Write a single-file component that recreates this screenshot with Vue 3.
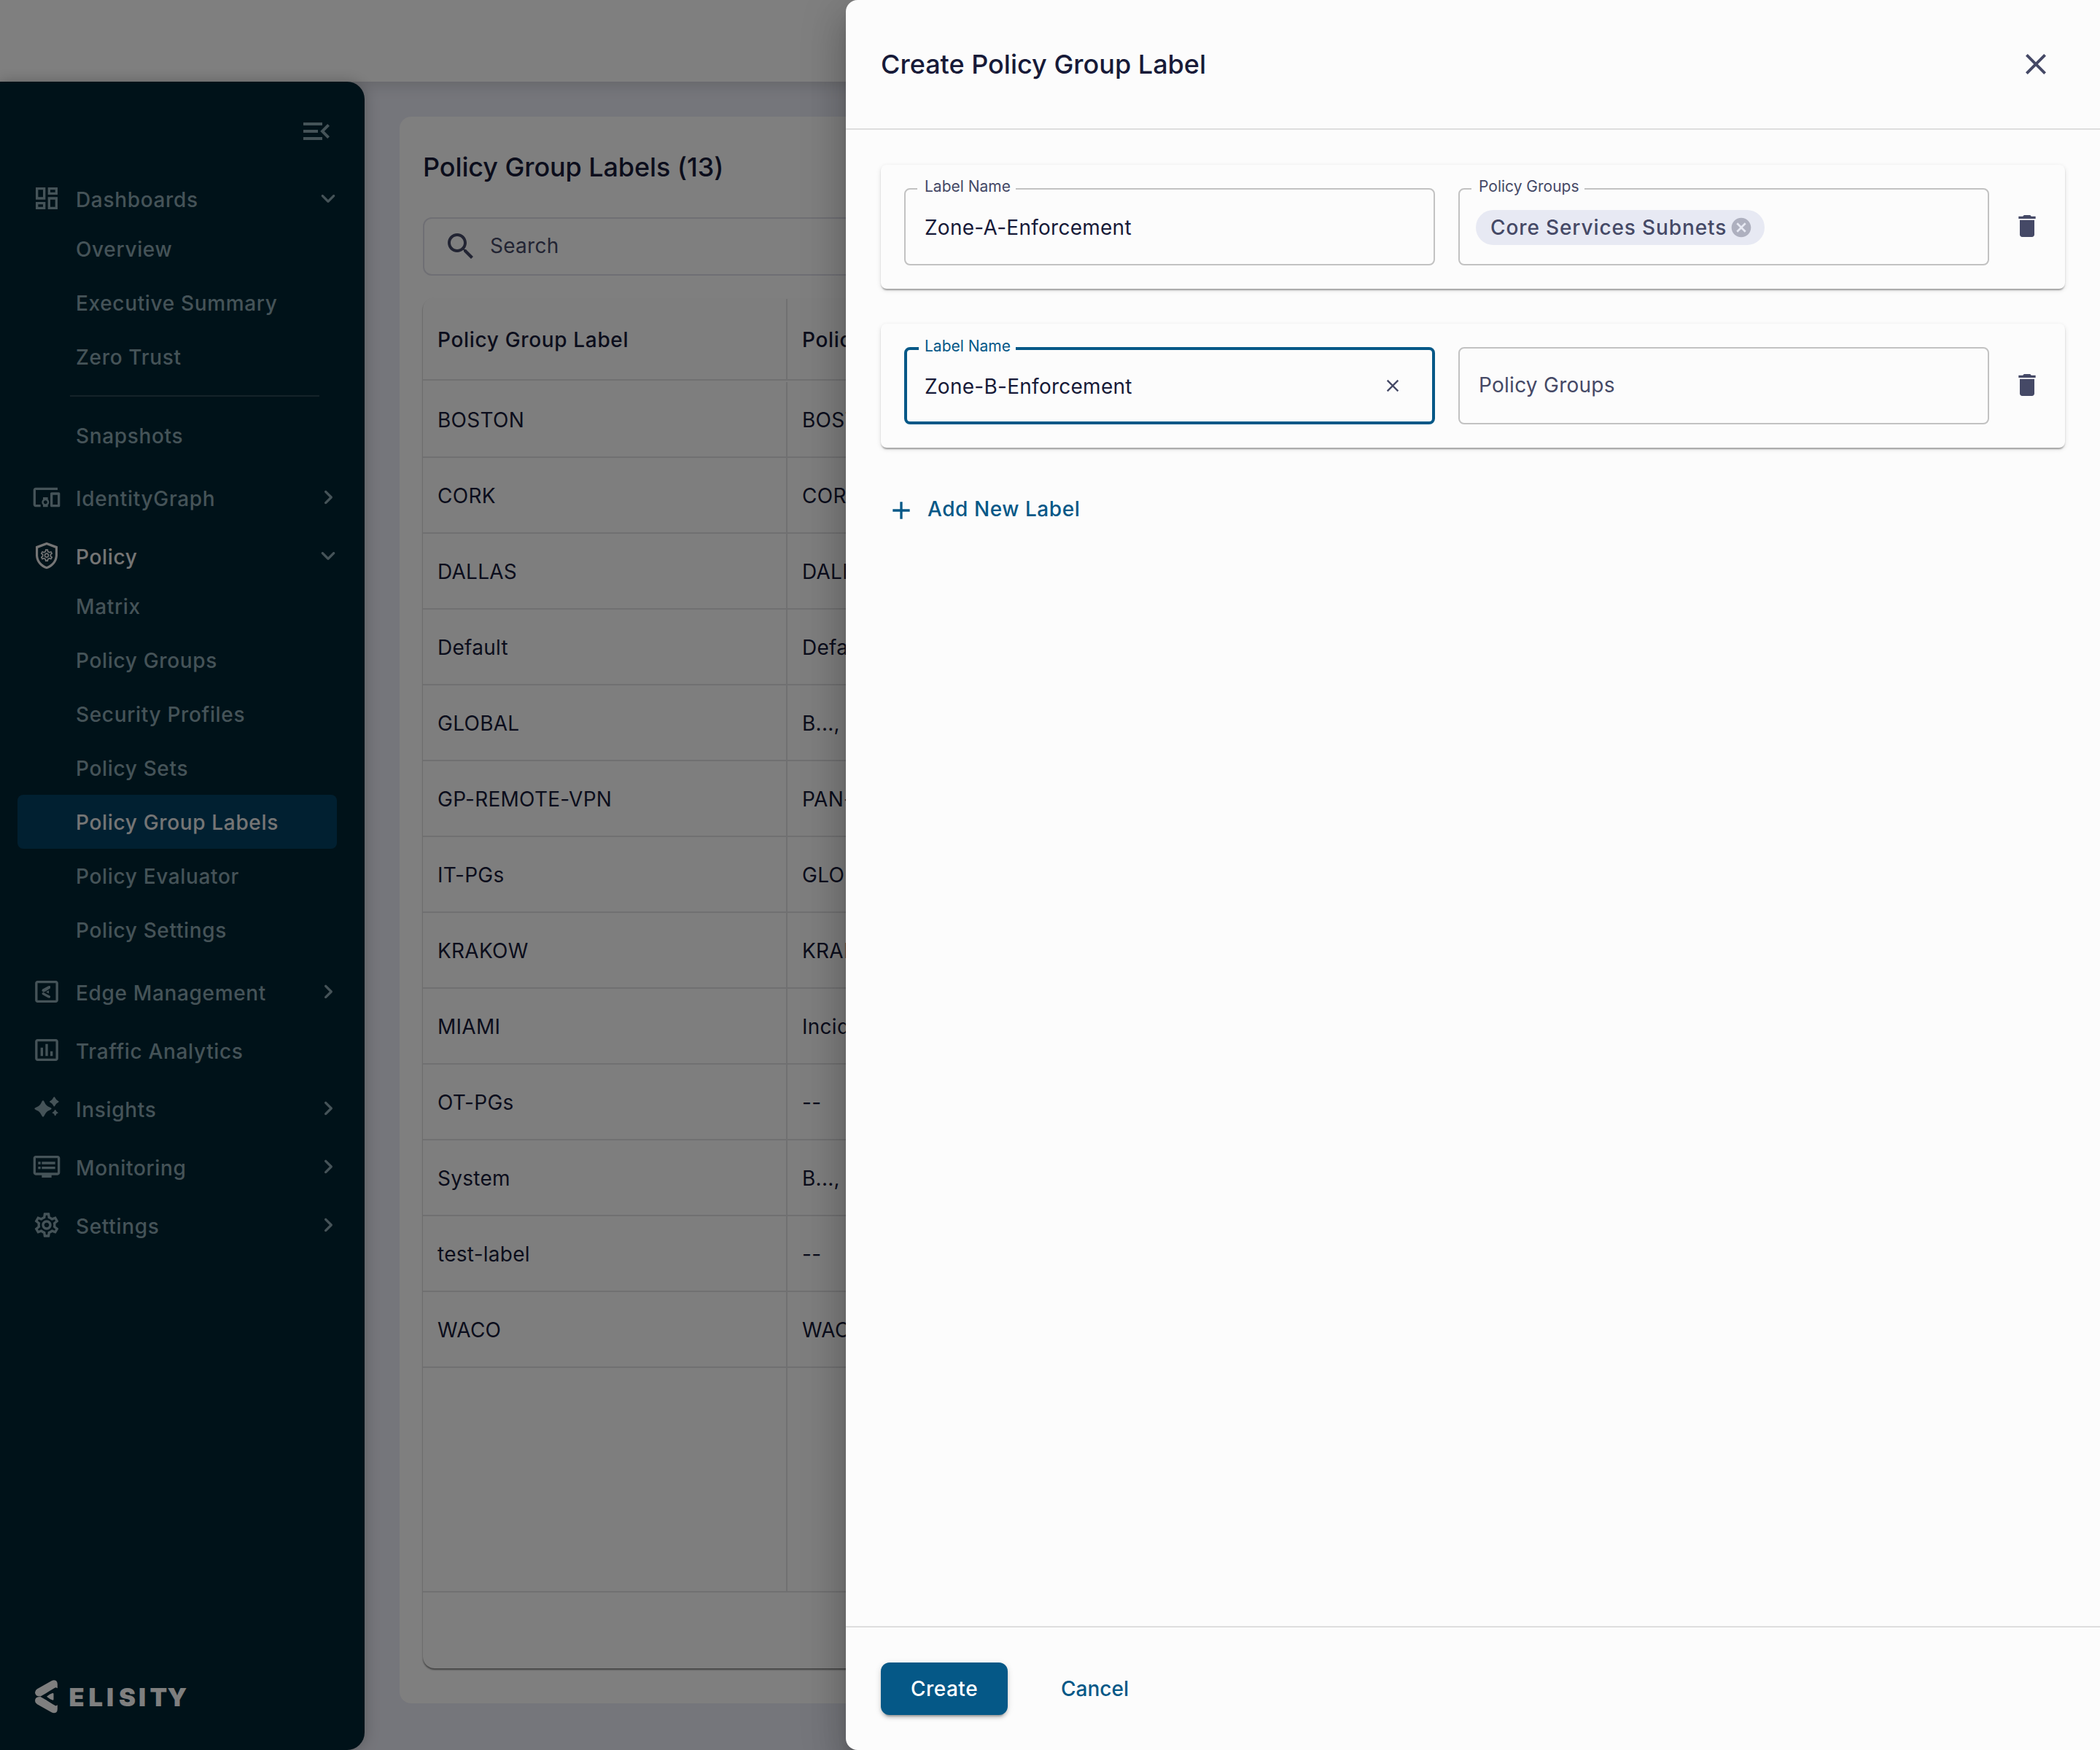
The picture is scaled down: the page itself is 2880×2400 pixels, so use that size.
<template>
  <div class="app">
    <header class="topbar"></header>

    <div class="body">
      <nav class="sidebar">
        <div class="sidebar-toggle">
          <svg class="icon-lg" viewBox="0 0 24 24"><path :d="icons.menuOpen" /></svg>
        </div>

        <div class="nav-list">
          <template v-for="section in sections" :key="section.name">
            <div class="nav-parent" :class="{ current: section.current }">
              <svg class="icon-md" viewBox="0 0 24 24">
                <path :d="icons[section.icon]" fill-rule="evenodd" />
                <!-- 방패 안의 톱니바퀴 -->
                <path v-if="section.icon === 'shield'" class="shield-gear" :d="icons.gear" />
              </svg>
              <span class="nav-name">{{ section.name }}</span>
              <svg v-if="section.arrow" class="icon-md nav-arrow" viewBox="0 0 24 24">
                <path :d="icons[section.arrow]" />
              </svg>
            </div>
            <template v-for="child in section.children" :key="child">
              <div v-if="child === '-'" class="nav-divider"></div>
              <div v-else class="nav-child" :class="{ active: child === activeItem }">{{ child }}</div>
            </template>
          </template>
        </div>

        <svg class="logo" viewBox="0 0 210 48">
          <path d="M22.500 2.200Q26 .2 29 2Q30.800 3.500 30.800 6.500V12.300L28.500 11.200Q26 12 15 19.200L7.500 23.500Q0 23.500 0 18Q0 15 3 13.200Z" />
          <path d="M22.500 45.200Q26 47.200 29 45.500Q30.800 44 30.800 41V35.200L28.500 36.400Q26 35.500 15 28.300L7.500 24.100Q0 24.100 0 29.500Q0 32.500 3 34.200Z" />
          <path d="M16 23.700Q20 20.200 24 19Q25.500 18.800 25.500 20V27.500Q25.500 29 24 28.500Q20 27.200 16 23.700Z" />
          <text x="46.500 73.500 98 115 142 157.500 181.500" y="36.800">ELISITY</text>
        </svg>
      </nav>

      <main class="content">
        <section class="panel">
          <h1 class="panel-title">Policy Group Labels (13)</h1>
          <div class="search">
            <svg class="icon-lg" viewBox="0 0 24 24"><path :d="icons.search" /></svg>
            <span>Search</span>
          </div>
          <div class="table">
            <div class="table-row table-head">
              <div class="cell">Policy Group Label</div>
              <div class="cell">Policy Groups</div>
            </div>
            <div v-for="row in rows" :key="row.label" class="table-row">
              <div class="cell">{{ row.label }}</div>
              <div class="cell">{{ row.groups }}</div>
            </div>
            <div class="table-row table-filler">
              <div class="cell"></div>
              <div class="cell"></div>
            </div>
            <div class="table-footer"></div>
          </div>
        </section>
      </main>
    </div>

    <div class="backdrop"></div>

    <aside class="drawer">
      <div class="drawer-header">
        <h2 class="drawer-title">Create Policy Group Label</h2>
        <button class="icon-btn" aria-label="Close">
          <svg class="icon-lg" viewBox="0 0 24 24"><path :d="icons.close" /></svg>
        </button>
      </div>

      <div class="drawer-body">
        <div v-for="(entry, index) in entries" :key="index" class="label-card">
          <fieldset class="field" :class="{ focused: entry.focused }">
            <legend><span>Label Name</span></legend>
            <div class="field-inner">
              <span class="field-value">{{ entry.name }}</span>
              <svg v-if="entry.focused" class="clear-icon" viewBox="0 0 24 24"><path :d="icons.close" /></svg>
            </div>
          </fieldset>

          <fieldset class="field">
            <legend v-if="entry.groups.length"><span>Policy Groups</span></legend>
            <div class="field-inner">
              <div v-for="group in entry.groups" :key="group" class="chip">
                <span>{{ group }}</span>
                <svg class="chip-delete" viewBox="0 0 24 24"><path :d="icons.cancel" /></svg>
              </div>
              <span v-if="!entry.groups.length" class="field-placeholder">Policy Groups</span>
            </div>
          </fieldset>

          <button class="icon-btn trash-btn" aria-label="Delete" @click="removeEntry(index)">
            <svg class="icon-md" viewBox="0 0 24 24"><path :d="icons.trash" /></svg>
          </button>
        </div>

        <button class="add-btn" @click="addEntry">
          <svg class="icon-md" viewBox="0 0 24 24"><path :d="icons.add" /></svg>
          <span>Add New Label</span>
        </button>
      </div>

      <div class="drawer-footer">
        <button class="btn btn-primary">Create</button>
        <button class="btn btn-text">Cancel</button>
      </div>
    </aside>
  </div>
</template>

<script setup>
import { ref } from 'vue'

const icons = {
  menuOpen: 'M3 18h13v-2H3v2zM3 6v2h13V6H3zm0 7h10v-2H3v2zm18 2.590L17.420 12 21 8.410 19.590 7l-5 5 5 5L21 15.590z',
  dashboard: 'M19 5v2h-4V5h4M9 5v6H5V5h4m10 8v6h-4v-6h4M9 17v2H5v-2h4M21 3h-8v6h8V3zM11 3H3v10h8V3zm10 8h-8v10h8V11zm-10 4H3v6h8v-6z',
  devices: 'M3 6h18V4H3c-1.100 0-2 .9-2 2v12c0 1.100.9 2 2 2h4v-2H3V6zm10 6H9v1.780c-.61.550-1 1.330-1 2.220s.39 1.670 1 2.220V20h4v-1.780c.61-.55 1-1.340 1-2.220s-.39-1.670-1-2.220V12zm-2 5.500c-.83 0-1.500-.67-1.500-1.500s.67-1.500 1.500-1.500 1.500.67 1.500 1.500-.67 1.500-1.500 1.500zM22 8h-6c-.5 0-1 .5-1 1v10c0 .5.5 1 1 1h6c.5 0 1-.5 1-1V9c0-.5-.5-1-1-1zm-1 10h-4v-8h4v8z',
  shield: 'M12 1L3 4.400v7.100c0 5.550 3.840 10 9 11.500 5.160-1.500 9-5.950 9-11.500V4.400L12 1zm0 2.100l7.100 2.700v5.700c0 4.520-3.030 8-7.100 9.470-4.070-1.470-7.100-4.950-7.100-9.470V5.800L12 3.100z',
  edge: 'M4.500 3c-1.100 0-2 .9-2 2v14c0 1.100.9 2 2 2h15c1.100 0 2-.9 2-2V5c0-1.100-.9-2-2-2zm0 2h15v14h-15zM14.500 7.200l.5.300v1.700l-3.600 2.300-2 1L8 11.400l.4-1.300 5-2.700zM9.400 12.600l2.100 1.200 3.500 1.800v1.200l-.8.400-1.200-.3-4.700-2.700-.2-1.200zM13.800 11v2.500L11.500 12.300z',
  chart: 'M9 17H7v-7h2v7zm4 0h-2V7h2v10zm4 0h-2v-4h2v4zM4.500 3c-1.100 0-2 .9-2 2v14c0 1.100.9 2 2 2h15c1.100 0 2-.9 2-2V5c0-1.100-.9-2-2-2zm0 2h15v14h-15z',
  sparkle: 'M9 5.500q.7 0 1.100 1.200 1.200 3.200 4.700 4.600 1.200.5 1.200 1t-1.200 1q-3.500 1.300-4.700 4.500Q9.700 19 9 19t-1.100-1.200q-1.200-3.200-4.700-4.500-1.200-.5-1.200-1t1.200-1q3.500-1.400 4.700-4.600Q8.300 5.500 9 5.500zM18.200 2.500q.4 0 .7.700.8 1.900 2.400 2.600.7.300.7.700t-.7.700q-1.600.7-2.400 2.600-.3.700-.7.700t-.7-.7q-.8-1.900-2.400-2.600-.7-.3-.7-.7t.7-.7q1.600-.7 2.400-2.600.3-.7.700-.7zM19 13q.4.100.6.800.3 1 1.300 1.300.6.200.6.500t-.6.500q-1 .3-1.300 1.300-.2.700-.6.800-.4-.1-.6-.8-.3-1-1.300-1.300-.6-.2-.6-.5t.6-.5q1-.3 1.300-1.300.2-.7.600-.8z',
  monitor: 'M21 3H3c-1.100 0-2 .9-2 2v12c0 1.100.9 2 2 2h5v2h8v-2h5c1.100 0 1.990-.9 1.990-2L23 5c0-1.100-.9-2-2-2zm0 14H3V5h18v12zm-2-9H8v2h11V8zm0 4H8v2h11v-2zM7 8H5v2h2V8zm0 4H5v2h2v-2z',
  gear: 'M19.430 12.980c.04-.32.070-.64.070-.98s-.03-.66-.07-.98l2.110-1.650c.19-.15.240-.42.120-.64l-2-3.460c-.09-.16-.26-.25-.44-.25-.06 0-.12.010-.17.030l-2.490 1c-.52-.4-1.080-.73-1.690-.98l-.38-2.650C14.460 2.180 14.250 2 14 2h-4c-.25 0-.46.180-.49.420l-.38 2.650c-.61.250-1.170.590-1.690.980l-2.490-1c-.06-.02-.12-.03-.18-.03-.17 0-.34.090-.43.250l-2 3.460c-.13.220-.07.490.120.640l2.110 1.650c-.04.320-.07.650-.07.980s.03.660.070.980l-2.110 1.650c-.19.150-.24.420-.12.640l2 3.460c.09.160.26.250.440.250.06 0 .12-.01.170-.03l2.490-1c.52.400 1.080.730 1.690.980l.38 2.650c.03.240.24.420.490.420h4c.25 0 .46-.18.490-.42l.38-2.650c.61-.25 1.170-.59 1.690-.98l2.490 1c.06.020.12.030.180.030.17 0 .34-.09.430-.25l2-3.460c.12-.22.070-.49-.12-.64l-2.110-1.650zm-1.980-1.710c.04.310.05.520.050.730 0 .21-.02.430-.05.730l-.14 1.130.890.700 1.080.840-.7 1.210-1.270-.51-1.040-.42-.9.680c-.43.320-.84.560-1.250.730l-1.060.430-.16 1.130-.2 1.350h-1.400l-.19-1.350-.16-1.130-1.060-.43c-.43-.18-.83-.41-1.230-.71l-.91-.7-1.060.430-1.270.510-.7-1.210 1.080-.84.890-.7-.14-1.130c-.03-.31-.05-.54-.05-.74s.02-.43.050-.73l.14-1.130-.89-.7-1.080-.84.700-1.210 1.270.510 1.040.420.900-.68c.43-.32.840-.56 1.250-.73l1.060-.43.160-1.130.2-1.350h1.390l.19 1.350.160 1.130 1.060.430c.43.180.83.410 1.230.710l.91.700 1.060-.43 1.270-.51.700 1.210-1.070.850-.89.700.14 1.130zM12 8c-2.210 0-4 1.790-4 4s1.790 4 4 4 4-1.790 4-4-1.790-4-4-4zm0 6c-1.100 0-2-.9-2-2s.9-2 2-2 2 .9 2 2-.9 2-2 2z',
  down: 'M8.120 9.290L12 13.170l3.880-3.880c.39-.39 1.020-.39 1.410 0 .39.390.39 1.020 0 1.410l-4.590 4.590c-.39.390-1.020.39-1.410 0L6.700 10.700c-.39-.39-.39-1.020 0-1.410.39-.38 1.030-.39 1.420 0z',
  right: 'M9.290 6.710c-.39.390-.39 1.020 0 1.410L13.170 12l-3.880 3.880c-.39.390-.39 1.020 0 1.410.39.390 1.020.39 1.410 0l4.590-4.590c.39-.39.39-1.020 0-1.410L10.700 6.700c-.38-.38-1.020-.38-1.410.010z',
  search: 'M15.500 14h-.79l-.28-.27C15.410 12.590 16 11.110 16 9.500 16 5.910 13.090 3 9.500 3S3 5.910 3 9.500 5.910 16 9.500 16c1.610 0 3.090-.59 4.230-1.570l.27.280v.79l5 4.990L20.490 19l-4.990-5zm-6 0C7.010 14 5 11.990 5 9.500S7.010 5 9.500 5 14 7.010 14 9.500 11.990 14 9.500 14z',
  close: 'M19 6.410L17.590 5 12 10.590 6.410 5 5 6.410 10.590 12 5 17.590 6.410 19 12 13.410 17.590 19 19 17.590 13.410 12z',
  cancel: 'M12 2C6.470 2 2 6.470 2 12s4.470 10 10 10 10-4.470 10-10S17.530 2 12 2zm5 13.590L15.590 17 12 13.410 8.410 17 7 15.590 10.590 12 7 8.410 8.410 7 12 10.590 15.590 7 17 8.410 13.410 12 17 15.590z',
  trash: 'M6 19c0 1.100.9 2 2 2h8c1.100 0 2-.9 2-2V7H6v12zM19 4h-3.500l-1-1h-5l-1 1H5v2h14V4z',
  add: 'M19 13h-6v6h-2v-6H5v-2h6V5h2v6h6v2z'
}

const activeItem = ref('Policy Group Labels')

const sections = [
  { name: 'Dashboards', icon: 'dashboard', arrow: 'down', children: ['Overview', 'Executive Summary', 'Zero Trust', '-', 'Snapshots'] },
  { name: 'IdentityGraph', icon: 'devices', arrow: 'right', children: [] },
  {
    name: 'Policy',
    icon: 'shield',
    arrow: 'down',
    current: true,
    children: ['Matrix', 'Policy Groups', 'Security Profiles', 'Policy Sets', 'Policy Group Labels', 'Policy Evaluator', 'Policy Settings']
  },
  { name: 'Edge Management', icon: 'edge', arrow: 'right', children: [] },
  { name: 'Traffic Analytics', icon: 'chart', children: [] },
  { name: 'Insights', icon: 'sparkle', arrow: 'right', children: [] },
  { name: 'Monitoring', icon: 'monitor', arrow: 'right', children: [] },
  { name: 'Settings', icon: 'gear', arrow: 'right', children: [] }
]

const rows = [
  { label: 'BOSTON', groups: 'BOSTON' },
  { label: 'CORK', groups: 'CORK' },
  { label: 'DALLAS', groups: 'DALLAS' },
  { label: 'Default', groups: 'Default' },
  { label: 'GLOBAL', groups: 'B..., ' },
  { label: 'GP-REMOTE-VPN', groups: 'PAN-' },
  { label: 'IT-PGs', groups: 'GLOBAL' },
  { label: 'KRAKOW', groups: 'KRAKOW' },
  { label: 'MIAMI', groups: 'Incident' },
  { label: 'OT-PGs', groups: '--' },
  { label: 'System', groups: 'B..., ' },
  { label: 'test-label', groups: '--' },
  { label: 'WACO', groups: 'WACO' }
]

const entries = ref([
  { name: 'Zone-A-Enforcement', groups: ['Core Services Subnets'], focused: false },
  { name: 'Zone-B-Enforcement', groups: [], focused: true }
])

const addEntry = () => {
  entries.value.push({ name: '', groups: [], focused: false })
}

const removeEntry = (index) => {
  entries.value.splice(index, 1)
}
</script>

<style>
body {
  margin: 0;
  overflow: hidden;
}
</style>

<style scoped>
.app {
  position: relative;
  display: flex;
  flex-direction: column;
  width: 2880px;
  height: 2400px;
  overflow: hidden;
  background: #ebecf6;
  font-family: Inter, "Liberation Sans", sans-serif;
  font-size: 28px;
  line-height: 40px;
  letter-spacing: 0.00938em;
  color: #171a38;
}

.app * {
  box-sizing: border-box;
}

svg {
  display: block;
  flex-shrink: 0;
  fill: currentColor;
}

.icon-lg {
  width: 48px;
  height: 48px;
}

.icon-md {
  width: 40px;
  height: 40px;
}

button {
  font: inherit;
  letter-spacing: inherit;
  color: inherit;
  background: none;
  border: none;
  padding: 0;
  cursor: pointer;
}

.topbar {
  height: 112px;
  flex-shrink: 0;
  background: #fff;
  box-shadow: 0 4px 20px rgba(0, 0, 0, 0.15);
}

.body {
  display: flex;
  flex: 1;
  min-height: 0;
}

/* 사이드바 */
.sidebar {
  display: flex;
  flex-direction: column;
  width: 500px;
  flex-shrink: 0;
  padding-top: 44px;
  background: #002432;
  border-radius: 0 24px 24px 0;
  box-shadow: 0 0 20px rgba(0, 0, 0, 0.25);
  color: #8ba7b1;
  font-weight: 500;
  letter-spacing: 0.66px;
}

.sidebar-toggle {
  display: flex;
  justify-content: flex-end;
  padding-right: 42px;
  margin-bottom: 36px;
}

.nav-list {
  flex: 1;
  padding: 0 38px 0 24px;
}

.nav-parent {
  display: flex;
  align-items: center;
  height: 64px;
  padding-left: 20px;
  margin-right: -8px;
}

.nav-parent:not(:first-child) {
  margin-top: 16px;
}

.nav-parent.current {
  color: #ebebeb;
}

.shield-gear {
  transform: translate(6px, 5.800px) scale(0.5);
}

.nav-name {
  flex: 1;
  margin-left: 20px;
  padding-top: 4px;
}

.nav-arrow {
  color: #8ba7b1;
}

.nav-child {
  height: 74px;
  line-height: 77px;
  padding-left: 80px;
  border-radius: 8px;
}

.nav-child.active {
  background: #034062;
  color: #ebebeb;
}

.nav-divider {
  height: 2px;
  margin: 16px 24px 16px 72px;
  background: #2b4753;
}

.logo {
  width: 210px;
  height: 48px;
  margin: 0 0 49px 48px;
  color: #fff;
}

.logo text {
  font-size: 34.500px;
  font-weight: 900;
  letter-spacing: 0;
}

/* 목록 패널 */
.content {
  flex: 1;
  padding: 48px 48px 64px;
}

.panel {
  display: flex;
  flex-direction: column;
  height: 100%;
  padding: 44px 32px 48px;
  background: #fff;
  border-radius: 16px;
}

.panel-title {
  margin: 0;
  font-size: 36px;
  line-height: 50px;
  font-weight: 500;
  letter-spacing: -0.1px;
}

.search {
  display: flex;
  align-items: center;
  gap: 16px;
  height: 80px;
  margin: 44px 0 30px;
  padding-left: 26px;
  border: 2px solid #dedee8;
  border-radius: 12px;
  color: #454966;
}

.search span {
  padding-bottom: 3px;
}

.table {
  display: flex;
  flex-direction: column;
  flex: 1;
  padding-top: 2px;
  background: #fcfcfc;
  border-radius: 16px;
  overflow: hidden;
  box-shadow: 0 2px 2px rgba(0, 0, 0, 0.4), 0 2px 3px rgba(0, 0, 0, 0.12);
}

.table-row {
  display: flex;
  height: 104px;
  border-bottom: 2px solid #e0e0e3;
}

.table-head {
  height: 112px;
  margin-bottom: 2px;
  font-weight: 500;
  letter-spacing: 0.66px;
}

.table-filler {
  flex: 1;
}

.cell {
  display: flex;
  align-items: center;
  width: 500px;
  padding: 2px 0 0 20px;
  white-space: pre;
  border-right: 2px solid #e0e0e3;
}

.table-footer {
  height: 104px;
}

.backdrop {
  position: absolute;
  inset: 0;
  background: rgba(0, 0, 0, 0.5);
}

/* 오른쪽 드로어 */
.drawer {
  position: absolute;
  top: 0;
  right: 0;
  bottom: 0;
  display: flex;
  flex-direction: column;
  width: 1720px;
  background: #fcfcfc;
  border-radius: 16px 0 0 16px;
  box-shadow: 0 16px 20px -10px rgba(0, 0, 0, 0.2), 0 32px 48px 4px rgba(0, 0, 0, 0.14), 0 12px 60px 10px rgba(0, 0, 0, 0.12);
}

.drawer-header {
  display: flex;
  align-items: center;
  justify-content: space-between;
  height: 178px;
  padding: 0 64px 0 48px;
  border-bottom: 2px solid #dedede;
}

.drawer-title {
  margin: 0;
  font-size: 36px;
  font-weight: 500;
  letter-spacing: 0;
}

.icon-btn {
  color: #454966;
}

.drawer-body {
  display: flex;
  flex-direction: column;
  align-items: flex-start;
  gap: 48px;
  flex: 1;
  padding: 48px;
}

.label-card {
  display: flex;
  align-items: center;
  gap: 32px;
  width: 100%;
  height: 170px;
  padding: 32px;
  border-radius: 8px;
  box-shadow: 0 4px 2px -2px rgba(0, 0, 0, 0.2), 0 2px 2px rgba(0, 0, 0, 0.14), 0 2px 6px rgba(0, 0, 0, 0.12);
}

.field {
  position: relative;
  width: 728px;
  height: 106px;
  margin: 0;
  padding: 0;
  border: 2px solid #c2c2c2;
  border-radius: 8px;
}

.field legend {
  height: 2px;
  margin-left: 16px;
  padding: 0 7px 0 10px;
  font-size: 21px;
  line-height: 2px;
  letter-spacing: 0;
  color: #454966;
}

.field.focused {
  border: 4px solid #055887;
}

.field.focused legend {
  height: 4px;
  line-height: 4px;
  color: #055887;
  padding-left: 8px;
}

.field legend span {
  position: relative;
  top: -3px;
}

.field-inner {
  position: absolute;
  inset: 0;
  display: flex;
  align-items: center;
  padding: 0 26px;
}

.field.focused .field-inner {
  padding: 0 40px 0 24px;
}

.field-value {
  flex: 1;
  padding-top: 2px;
}

.field-placeholder {
  padding-bottom: 2px;
  color: #454966;
}

.clear-icon {
  width: 28px;
  height: 28px;
  color: #454966;
}

.chip {
  display: flex;
  align-items: center;
  height: 48px;
  margin: 2px 0 0 -4px;
  padding: 0 16px 0 20px;
  border-radius: 24px;
  background: #e7e9f3;
  color: #454966;
  font-weight: 500;
  letter-spacing: 0.88px;
}

.chip-delete {
  width: 32px;
  height: 32px;
  margin-left: 4px;
  color: #aeb0bf;
}

.trash-btn {
  margin-top: -2px;
}

.add-btn {
  display: flex;
  align-items: center;
  gap: 16px;
  margin: 16px 0 0 8px;
  color: #055887;
  font-weight: 500;
  letter-spacing: 0.55px;
}

.add-btn span {
  padding-bottom: 4px;
}

.drawer-footer {
  display: flex;
  align-items: center;
  gap: 33px;
  height: 170px;
  padding: 0 48px;
  border-top: 2px solid #dedede;
}

.btn {
  height: 72px;
  padding: 0 40px;
  border-radius: 12px;
  font-weight: 500;
  letter-spacing: 0.5px;
}

.btn-primary {
  width: 174px;
  background: #055887;
  color: #fff;
  box-shadow: 0 6px 2px -4px rgba(0, 0, 0, 0.2), 0 4px 4px rgba(0, 0, 0, 0.14), 0 2px 10px rgba(0, 0, 0, 0.12);
}

.btn-text {
  color: #055887;
  letter-spacing: 0;
}
</style>
